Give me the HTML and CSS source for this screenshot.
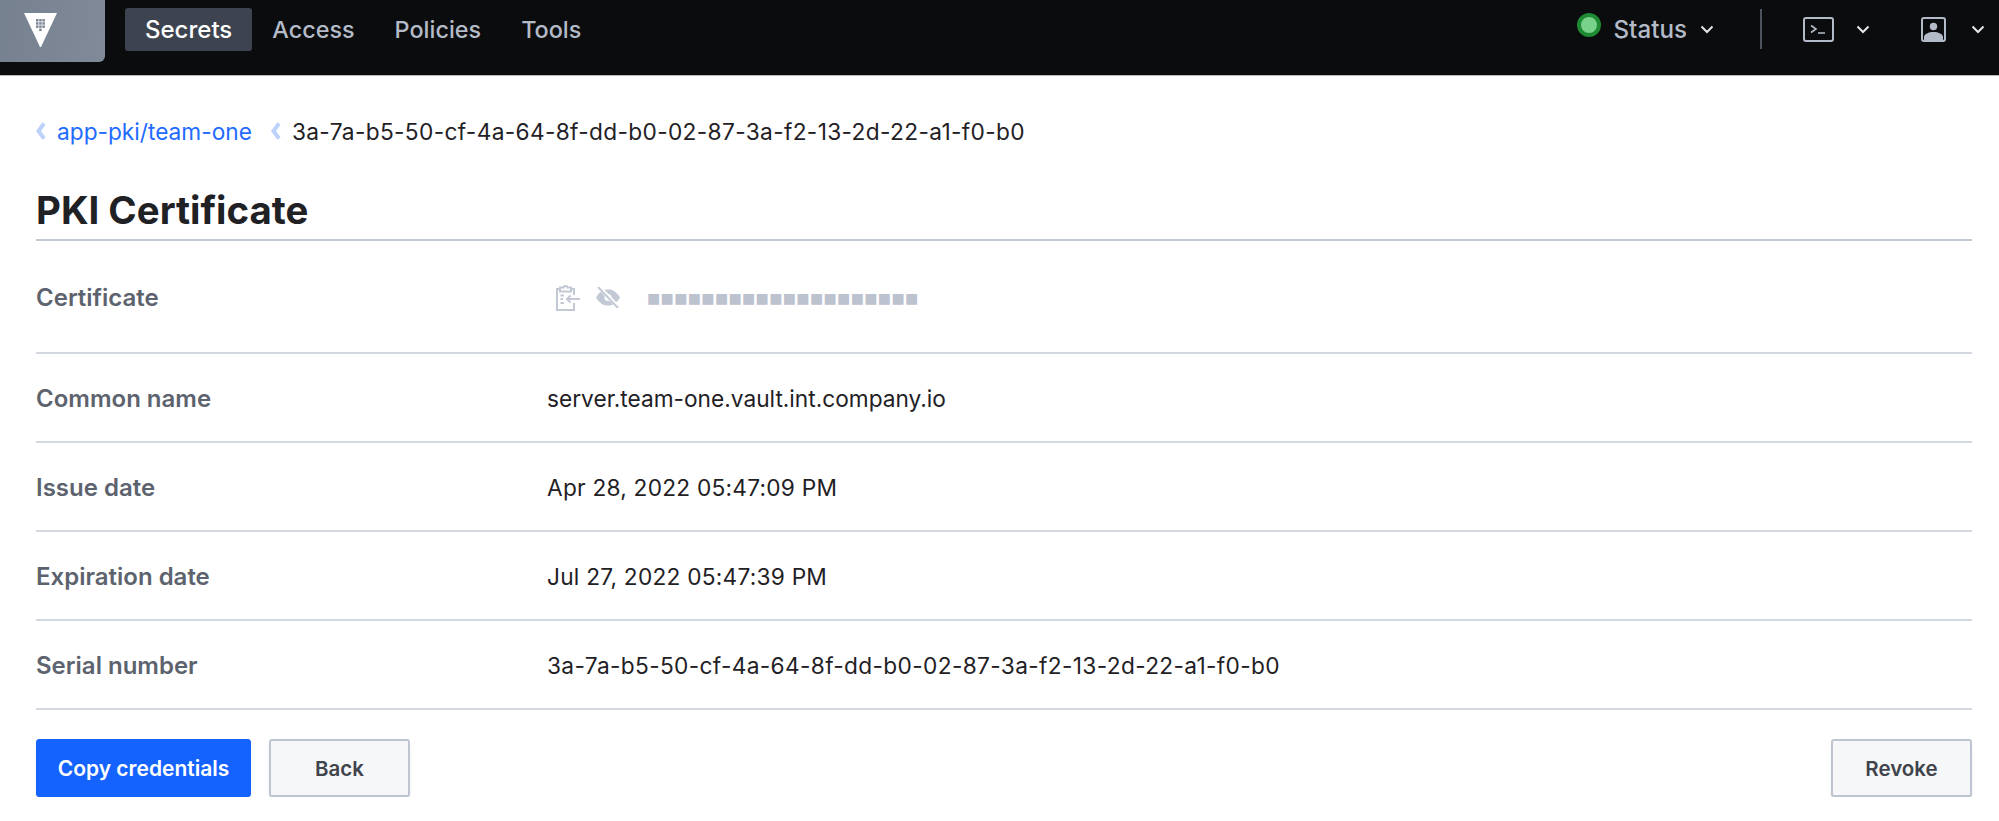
FILE: index.html
```html
<!DOCTYPE html>
<html lang="en">
<head>
    <meta charset="UTF-8">
    <title>PKI Certificate</title>
    <link rel="stylesheet" href="styles.css">
</head>
<body>
    <header class="navbar">
        <a class="logo">
            <svg width="33" height="34" viewBox="0 0 33 34">
                <path d="M0 0H33L17 34H16Z" fill="#fff"/>
                <g fill="#7e8896">
                    <rect x="12" y="6" width="2.500" height="2.500"/><rect x="15.200" y="6" width="2.500" height="2.500"/><rect x="18.400" y="6" width="2.500" height="2.500"/>
                    <rect x="12" y="9.200" width="2.500" height="2.500"/><rect x="15.200" y="9.200" width="2.500" height="2.500"/><rect x="18.400" y="9.200" width="2.500" height="2.500"/>
                    <rect x="12" y="12.400" width="2.500" height="2.500"/><rect x="15.200" y="12.400" width="2.500" height="2.500"/><rect x="18.400" y="12.400" width="2.500" height="2.500"/>
                    <rect x="15.200" y="15.600" width="2.500" height="2.500"/>
                </g>
            </svg>
        </a>
        <nav class="nav-links">
            <a class="nav-link active">Secrets</a>
            <a class="nav-link">Access</a>
            <a class="nav-link">Policies</a>
            <a class="nav-link">Tools</a>
        </nav>
        <div class="nav-right">
            <span class="status-dot"></span>
            <span class="status-label">Status</span>
            <svg class="chev chev-status" width="14" height="9" viewBox="0 0 14 9"><path d="M1.500 1.500L7 7L12.500 1.500"/></svg>
            <span class="nav-divider"></span>
            <svg class="nav-icon" width="31" height="25" viewBox="0 0 31 25" fill="none" stroke="#b4bbc8" stroke-width="2">
                <rect x="1" y="1" width="29" height="23" rx="2"/>
                <path d="M8 8.500L13 12L8 15.500M15 16H22" stroke-width="1.600"/>
            </svg>
            <svg class="chev chev-term" width="14" height="9" viewBox="0 0 14 9"><path d="M1.500 1.500L7 7L12.500 1.500"/></svg>
            <svg class="nav-icon user-icon" width="25" height="25" viewBox="0 0 25 25">
                <rect x="1" y="1" width="23" height="23" rx="2" fill="none" stroke="#b4bbc8" stroke-width="2"/>
                <circle cx="12.500" cy="9.500" r="3.700" fill="#b4bbc8"/>
                <path d="M3 24V20C3 17 8 15 12.500 15S22 17 22 20V24Z" fill="#b4bbc8"/>
            </svg>
            <svg class="chev chev-user" width="14" height="9" viewBox="0 0 14 9"><path d="M1.500 1.500L7 7L12.500 1.500"/></svg>
        </div>
    </header>

    <main class="page">
        <div class="breadcrumb">
            <svg class="crumb-sep" width="11" height="18" viewBox="0 0 11 18"><path d="M9 1.500L3.500 9L9 16.500"/></svg>
            <a class="crumb-link">app-pki/team-one</a>
            <svg class="crumb-sep" width="11" height="18" viewBox="0 0 11 18"><path d="M9 1.500L3.500 9L9 16.500"/></svg>
            <span class="serial">3a-7a-b5-50-cf-4a-64-8f-dd-b0-02-87-3a-f2-13-2d-22-a1-f0-b0</span>
        </div>
        <h1 class="title">PKI Certificate</h1>

        <div class="row row-cert">
            <div class="row-label">Certificate</div>
            <div class="row-value masked">
                <svg class="copy-icon" width="24" height="26" viewBox="0 0 24 26" fill="none" stroke="#c2c8d4" stroke-width="2">
                    <path d="M15 4H18V10M18 18V25H1V4H4M4 2.500H7.500C7.500 0.500 11.500 0.500 11.500 2.500H15V6.500H4Z"/>
                    <path d="M4.500 10.500H8M4.500 14H7M4.500 18H8M24 14H11M14.500 10.500L11 14L14.500 17.500"/>
                </svg>
                <svg class="eye-icon" width="24" height="21" viewBox="0 0 24 21">
                    <path d="M0 10.500C4 4 8 2.500 12 2.500S20 4 24 10.500C20 17 16 18.500 12 18.500S4 17 0 10.500Z" fill="#c2c8d4"/>
                    <circle cx="12" cy="10.500" r="3.500" fill="#fff"/>
                    <path d="M3 0L23 21" stroke="#fff" stroke-width="4"/>
                    <path d="M2 0L22 21" stroke="#c2c8d4" stroke-width="2"/>
                </svg>
                <span class="mask-dots">■■■■■■■■■■■■■■■■■■■■</span>
            </div>
        </div>
        <div class="row">
            <div class="row-label">Common name</div>
            <div class="row-value">server.team-one.vault.int.company.io</div>
        </div>
        <div class="row">
            <div class="row-label">Issue date</div>
            <div class="row-value date">Apr 28, 2022 05:47:09 PM</div>
        </div>
        <div class="row">
            <div class="row-label">Expiration date</div>
            <div class="row-value date">Jul 27, 2022 05:47:39 PM</div>
        </div>
        <div class="row">
            <div class="row-label">Serial number</div>
            <div class="row-value serial">3a-7a-b5-50-cf-4a-64-8f-dd-b0-02-87-3a-f2-13-2d-22-a1-f0-b0</div>
        </div>

        <div class="actions">
            <button class="btn btn-primary">Copy credentials</button>
            <button class="btn btn-back">Back</button>
            <button class="btn btn-revoke">Revoke</button>
        </div>
    </main>
</body>
</html>
```

FILE: styles.css
```css
* {
    box-sizing: border-box;
}
body {
    margin: 0;
    background: #fff;
    color: #1f2125;
    font-family: Inter, "Liberation Sans", sans-serif;
    overflow: hidden;
}

/* top bar */
.navbar {
    display: flex;
    align-items: flex-start;
    height: 76px;
    background: #0b0c0d;
    border-bottom: 1px solid #b9b9b9;
}
.logo {
    width: 105px;
    height: 62px;
    padding: 13px 0 0 24px;
    background: linear-gradient(100deg, #76818f, #808a98);
    border-bottom-right-radius: 6px;
}
.nav-links {
    display: flex;
    margin: 8px 0 0 20px;
}
.nav-link {
    height: 43px;
    padding: 0 20px;
    border-radius: 3px;
    color: #b4bbc8;
    font-size: 23.400px;
    font-weight: 500;
    line-height: 43px;
}
.nav-link.active {
    background: #3d444f;
    color: #fff;
    font-size: 24px;
}
.nav-right {
    display: flex;
    align-items: center;
    height: 42px;
    margin: 8px 0 0 auto;
    padding-right: 14px;
}
.status-dot {
    width: 24px;
    height: 24px;
    margin: -8px 12px 0 0;
    border: 4px solid #1f8a34;
    border-radius: 50%;
    background: #79d289;
}
.status-label {
    color: #b4bbc8;
    font-size: 24.200px;
    font-weight: 500;
}
.chev {
    fill: none;
    stroke: #e4e6ea;
    stroke-width: 2;
}
.chev-status {
    margin-left: 13px;
}
.nav-divider {
    width: 2px;
    height: 40px;
    margin: 0 41px 0 46px;
    background: #4d535c;
}
.chev-term {
    margin-left: 22px;
}
.user-icon {
    margin-left: 51px;
}
.chev-user {
    margin-left: 25px;
}

/* page content */
.page {
    padding: 0 27px 0 36px;
}
.breadcrumb {
    display: flex;
    align-items: center;
    height: 30px;
    margin: 40px 0 0 -1px;
    font-size: 22.700px;
}
.crumb-sep {
    flex: none;
    margin-right: 11px;
    fill: none;
    stroke: #bcd2fb;
    stroke-width: 4;
}
.crumb-link {
    margin-right: 18px;
    color: #1f6bff;
}
.title {
    height: 95px;
    margin: 0;
    padding-top: 41px;
    border-bottom: 2px solid #c2c8d4;
    font-size: 38.400px;
    font-weight: 700;
    line-height: 46px;
}
.row {
    display: flex;
    align-items: center;
    height: 89px;
    padding-top: 2px;
    border-bottom: 2px solid #d3d7e0;
    font-size: 22.700px;
}
.row-cert {
    height: 113px;
}
.row-label {
    width: 511px;
    color: #5d636e;
    font-size: 24px;
    font-weight: 600;
}
.serial {
    letter-spacing: 0.350px;
}
.date {
    letter-spacing: 0.230px;
}
.masked {
    display: flex;
    align-items: center;
}
.copy-icon {
    margin-left: 9px;
}
.eye-icon {
    margin-left: 16px;
}
.mask-dots {
    margin-left: 27px;
    color: #bcc2ce;
    font-family: "DejaVu Sans", sans-serif;
    font-size: 14px;
    letter-spacing: 0.350px;
}

/* buttons */
.actions {
    display: flex;
    margin-top: 29px;
}
.btn {
    height: 58px;
    border-radius: 3px;
    font-family: inherit;
    font-size: 20.500px;
    font-weight: 600;
    box-shadow: 0 5px 3px -1px rgba(80, 90, 105, 0.25);
}
.btn-primary {
    width: 215px;
    border: 1px solid #1563ff;
    background: #1563ff;
    color: #fff;
    font-size: 21px;
}
.btn-back,
.btn-revoke {
    width: 141px;
    border: 2px solid #bfc5d0;
    background: #f6f7f9;
    color: #3f434b;
}
.btn-back {
    margin-left: 18px;
}
.btn-revoke {
    margin-left: auto;
}
```
